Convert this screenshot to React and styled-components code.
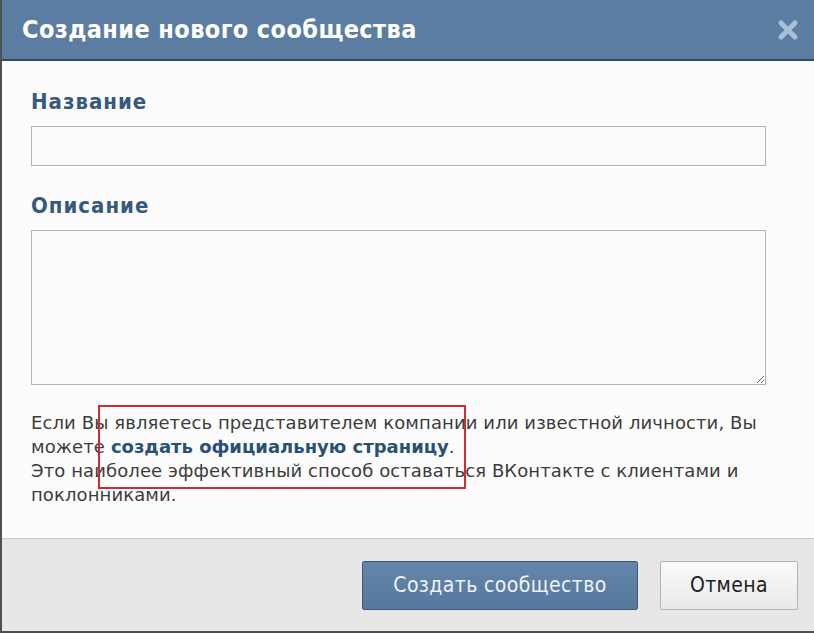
import React from "react";
import styled, { createGlobalStyle } from "styled-components";

const GlobalStyle = createGlobalStyle`
  html, body {
    margin: 0;
    padding: 0;
    background: #ffffff;
  }
  body {
    font-family: "DejaVu Sans", "Liberation Sans", sans-serif;
  }
`;

const Dialog = styled.div`
  width: 814px;
  height: 633px;
  display: flex;
  flex-direction: column;
  border-left: 2px solid #505050;
  border-bottom: 2px solid #505050;
  box-sizing: border-box;
  background: #fafafa;
`;

const Header = styled.div`
  height: 59px;
  flex-shrink: 0;
  display: flex;
  align-items: center;
  justify-content: space-between;
  padding: 0 14px 0 20px;
  background: #5b7da2;
  border-bottom: 2px solid #34495f;
`;

const Title = styled.h1`
  margin: 0;
  font-family: "DejaVu Sans Condensed", "DejaVu Sans", sans-serif;
  font-size: 25px;
  font-weight: bold;
  letter-spacing: 0.4px;
  color: #ffffff;
`;

const CloseButton = styled.button`
  border: none;
  background: none;
  padding: 0;
  width: 24px;
  height: 24px;
  display: flex;
  align-items: center;
  justify-content: center;
  cursor: pointer;
`;

const Body = styled.div`
  flex: 1;
  display: flex;
  flex-direction: column;
  padding: 28px 48px 0 29px;
  background: #fcfcfc;
`;

const Label = styled.label`
  font-family: "DejaVu Sans Condensed", "DejaVu Sans", sans-serif;
  font-size: 22px;
  font-weight: bold;
  letter-spacing: 1px;
  color: #36597d;
  margin-bottom: 12px;
`;

const TextInput = styled.input`
  height: 40px;
  box-sizing: border-box;
  border: 1px solid #b4b4b4;
  background: #fbfbfb;
  margin-bottom: 27px;
  font-size: 16px;
`;

const TextArea = styled.textarea`
  height: 155px;
  box-sizing: border-box;
  border: 1px solid #b4b4b4;
  background: #fbfbfb;
  resize: vertical;
  font-size: 16px;
  margin-bottom: 26px;
`;

const Note = styled.p`
  margin: 0;
  font-size: 18px;
  letter-spacing: 0.1px;
  line-height: 24px;
  color: #3c3c3c;
  position: relative;
`;

const Link = styled.a`
  font-weight: bold;
  letter-spacing: 0;
  color: #2b5076;
  text-decoration: none;
`;

const Highlight = styled.span`
  position: absolute;
  left: 67px;
  top: -6px;
  width: 368px;
  height: 84px;
  box-sizing: border-box;
  border: 2px solid #cf2b33;
  pointer-events: none;
`;

const Footer = styled.div`
  height: 92px;
  flex-shrink: 0;
  display: flex;
  align-items: center;
  justify-content: flex-end;
  gap: 22px;
  padding: 0 16px 0 0;
  background: #e7e7e7;
  border-top: 1px solid #c9c9c9;
`;

const Button = styled.button`
  height: 49px;
  box-sizing: border-box;
  padding: 0;
  width: ${(p) => p.$width}px;
  font-family: "DejaVu Sans Condensed", "DejaVu Sans", sans-serif;
  font-size: 21px;
  letter-spacing: 0.4px;
  border-radius: 2px;
  cursor: pointer;
  color: ${(p) => (p.$primary ? "#eef3f8" : "#222222")};
  background: ${(p) =>
    p.$primary
      ? "linear-gradient(#6585aa, #57799e)"
      : "linear-gradient(#fafafa, #e9e9e9)"};
  border: 1px solid ${(p) => (p.$primary ? "#3d5b7d" : "#b3b3b3")};
`;

export default function App() {
  return (
    <>
      <GlobalStyle />
      <Dialog>
        <Header>
          <Title>Создание нового сообщества</Title>
          <CloseButton aria-label="Закрыть">
            <svg width="22" height="22" viewBox="0 0 22 22">
              <path
                d="M4 4 L18 18 M18 4 L4 18"
                stroke="#a8bfd8"
                strokeWidth="5"
                strokeLinecap="round"
              />
            </svg>
          </CloseButton>
        </Header>
        <Body>
          <Label>Название</Label>
          <TextInput type="text" />
          <Label>Описание</Label>
          <TextArea />
          <Note>
            Если Вы являетесь представителем компании или известной личности, Вы
            можете <Link href="#">создать официальную страницу</Link>.
            <br />
            Это наиболее эффективный способ оставаться ВКонтакте с клиентами и
            поклонниками.
            <Highlight />
          </Note>
        </Body>
        <Footer>
          <Button $primary $width={276}>Создать сообщество</Button>
          <Button $width={138}>Отмена</Button>
        </Footer>
      </Dialog>
    </>
  );
}
